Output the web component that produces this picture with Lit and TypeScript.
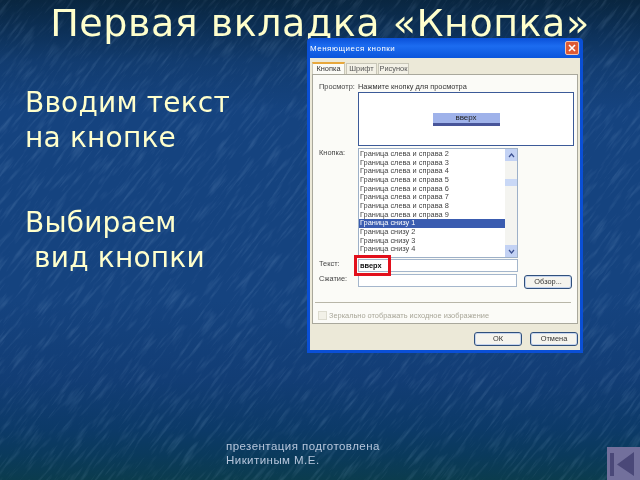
import { LitElement, html, css } from "lit";
import { customElement } from "lit/decorators.js";

const ROWS = [
  "Граница слева и справа 2",
  "Граница слева и справа 3",
  "Граница слева и справа 4",
  "Граница слева и справа 5",
  "Граница слева и справа 6",
  "Граница слева и справа 7",
  "Граница слева и справа 8",
  "Граница слева и справа 9",
  "Граница снизу 1",
  "Граница снизу 2",
  "Граница снизу 3",
  "Граница снизу 4",
];

@customElement("app-root")
export class AppRoot extends LitElement {
  static styles = css`
    :host { display: block; width: 640px; height: 480px; overflow: hidden; }
    .slide {
      position: relative; width: 640px; height: 480px; overflow: hidden;
      display: flex; flex-direction: column;
      font-family: "DejaVu Sans", sans-serif; color: #ffffcc;
      background: linear-gradient(180deg, #092640 0, #0c2f55 28px, #123c70 62px, #15437f 110px, #15437f 300px, #123d75 380px, #0c3a68 430px, #0a3a5c 455px, #0b3c4e 480px);
    }
    .texture { position: absolute; inset: 0; width: 640px; height: 480px; mix-blend-mode: screen; opacity: .24; }
    h1 {
      position: relative; margin: 0; height: 38px; padding-top: 6px; box-sizing: border-box;
      font-weight: 400; font-size: 38px; line-height: 34px; letter-spacing: .55px; text-align: center; white-space: nowrap;
    }
    main { position: relative; display: flex; height: 315px; }
    .lead { width: 307px; box-sizing: border-box; padding: 47px 0 0 25px; font-size: 28px; letter-spacing: .2px; line-height: 35px; white-space: pre; }
    .gap { height: 50px; }
    footer { position: relative; margin-top: auto; display: flex; justify-content: space-between; align-items: flex-end; padding-left: 226px; }
    .note { font: 11.5px/14px "Liberation Sans", sans-serif; color: #b7c6dc; margin-bottom: 13px; letter-spacing: .45px; }
    .nav { width: 33px; height: 33px; background: #72709c; display: block; }

    .dialog {
      position: relative;
      width: 276px; height: 315px; box-sizing: border-box; display: flex; flex-direction: column;
      background: #0a4fd6; border-radius: 4px 4px 0 0; padding: 0 3px 3px;
      font: 7.4px/9px "Liberation Sans", sans-serif; color: #333;
    }
    .titlebar {
      height: 20px; flex: none; display: flex; align-items: center; justify-content: space-between;
      padding: 0 1px 0 0; color: #fff; font-size: 8px; letter-spacing: .5px;
      background: linear-gradient(180deg, #0a50d8, #1c6cf0 40%, #0a55dc);
    }
    .blur { filter: blur(.5px); }
    .close {
      width: 14px; height: 14px; border-radius: 2px; background: #dd5a34; border: 1px solid #f2c4b0;
      box-sizing: border-box; display: block;
    }
    .face { flex: 1; background: #ece9d8; display: flex; flex-direction: column; padding: 3px 2px 0 2px; min-height: 0; }
    .tabs { display: flex; height: 13px; gap: 1px; flex: none; align-items: flex-end; }
    .tab { height: 11px; width: 31px; text-align: center; background: #f3f1e6; border: 1px solid #c8c6b8; border-bottom: 0; box-sizing: border-box; line-height: 10px; color: #555; }
    .tab.on { height: 13px; background: #fbfbf6; border-top: 2px solid #e8a83c; width: 33px; color: #333; line-height: 10px; margin-bottom: -1px; position: relative; }
    .panel {
      height: 250px; flex: none; background: #fbfbf7; border: 1px solid #a9a89c; box-sizing: border-box;
      padding: 7px 5px 0 4px; display: flex; flex-direction: column; position: relative;
    }
    .row { display: flex; flex: none; }
    .lab { width: 39px; padding-left: 2px; flex: none; color: #444; }
    .hint { height: 9px; }
    .preview {
      margin: 1px 0 2px 41px; width: 216px; height: 54px; box-sizing: border-box; background: #fff; border: 1px solid #3c5a98;
      display: flex; align-items: center; justify-content: center; flex: none;
    }
    .pbtn {
      width: 67px; height: 13px; box-sizing: border-box; background: #9fb2ea; border-bottom: 3px solid #48559a;
      text-align: center; line-height: 10px; color: #222; font-size: 8px;
    }
    .listwrap {
      width: 160px; height: 110px; box-sizing: border-box; background: #fff; border: 1px solid #9db0c8; display: flex; flex: none; overflow: hidden;
    }
    .list { flex: 1; min-width: 0; padding-top: 1px; }
    .item { height: 8.67px; line-height: 8.67px; padding-left: 1px; white-space: nowrap; color: #444; }
    .item.sel { background: #3a5cb0; color: #fff; }
    .scroll { width: 12px; flex: none; background: #f4f4f0; display: flex; flex-direction: column; justify-content: space-between; position: relative; }
    .arrow { height: 12px; background: #c3d2f4; color: #3a4f90; display: flex; align-items: center; justify-content: center; }
    .thumb { position: absolute; left: 0; right: 0; top: 30px; height: 7px; background: #c9d8f6; }
    .field { height: 13px; width: 160px; box-sizing: border-box; background: #fff; border: 1px solid #a4b6cc; line-height: 11px; padding-left: 1px; font-weight: 700; color: #111; }
    .mt1 { margin-top: 1px; }
    .mt2 { margin-top: 2px; }
    .xp {
      box-sizing: border-box; background: #f5f4ee; border: 1px solid #30507c; border-radius: 3px; text-align: center; line-height: 12px; color: #333;
      box-shadow: inset 0 0 0 1px #c5d4ee;
    }
    .browse { width: 48px; height: 14px; margin: 1px 0 0 7px; }
    .sep { height: 1px; background: #b8b6a8; margin: 13px 1px 0 0; width: 256px; align-self: flex-end; flex: none; }
    .check { display: flex; align-items: center; gap: 2px; margin-top: 8px; color: #a8a698; }
    .box { width: 9px; height: 9px; background: #f2f1e8; border: 1px solid #dddcd0; box-sizing: border-box; flex: none; margin-left: 1px; }
    .buttons { display: flex; justify-content: flex-end; gap: 8px; padding: 8px 0 0; }
    .buttons .xp { width: 48px; height: 14px; }
    .mark { position: absolute; left: 41px; top: 180px; width: 37px; height: 21px; box-sizing: border-box; border: 3px solid #e2101c; }
  `;

  render() {
    return html`
      <div class="slide">
        <svg class="texture" viewBox="0 0 640 480" aria-hidden="true">
          <filter id="streak" x="0" y="0" width="100%" height="100%">
            <feTurbulence type="fractalNoise" baseFrequency="0.035 0.3" numOctaves="3" seed="4" />
            <feColorMatrix type="matrix" values="0 0 0 0 .42  0 0 0 0 .58  0 0 0 0 .85  1.6 0 0 0 -.82" />
          </filter>
          <rect x="-500" y="-500" width="1700" height="1500" filter="url(#streak)" transform="rotate(-52 320 240)" />
        </svg>
        <h1>Первая вкладка «Кнопка»</h1>
        <main>
          <div class="lead"><div>Вводим текст
на кнопке</div><div class="gap"></div><div>Выбираем
 вид кнопки</div></div>
          <section class="dialog">
            <div class="titlebar">
              <span class="blur">Меняющиеся кнопки</span>
              <svg class="close" viewBox="0 0 12 12"><path d="M3 3l6 6M9 3l-6 6" stroke="#fff" stroke-width="1.6" fill="none" /></svg>
            </div>
            <div class="face">
              <div class="tabs blur">
                <div class="tab on">Кнопка</div>
                <div class="tab">Шрифт</div>
                <div class="tab">Рисунок</div>
              </div>
              <div class="panel">
                <div class="row hint blur"><span class="lab">Просмотр:</span><span>Нажмите кнопку для просмотра</span></div>
                <div class="preview"><div class="pbtn blur">вверх</div></div>
                <div class="row">
                  <span class="lab blur">Кнопка:</span>
                  <div class="listwrap">
                    <div class="list blur">
                      ${ROWS.map((r, i) => html`<div class="item ${i === 8 ? "sel" : ""}">${r}</div>`)}
                    </div>
                    <div class="scroll">
                      <div class="arrow"><svg width="7" height="5" viewBox="0 0 7 5"><path d="M1 4l2.5-3L6 4" fill="none" stroke="currentColor" stroke-width="1.2" /></svg></div>
                      <div class="thumb"></div>
                      <div class="arrow"><svg width="7" height="5" viewBox="0 0 7 5"><path d="M1 1l2.5 3L6 1" fill="none" stroke="currentColor" stroke-width="1.2" /></svg></div>
                    </div>
                  </div>
                </div>
                <div class="row mt1">
                  <span class="lab blur">Текст:</span>
                  <div class="field blur">вверх</div>
                </div>
                <div class="row mt2">
                  <span class="lab blur">Сжатие:</span>
                  <div class="field"></div>
                  <div class="xp browse blur">Обзор...</div>
                </div>
                <div class="sep"></div>
                <div class="check"><span class="box"></span><span class="blur">Зеркально отображать исходное изображение</span></div>
                <div class="mark"></div>
              </div>
              <div class="buttons">
                <div class="xp blur">ОК</div>
                <div class="xp blur">Отмена</div>
              </div>
            </div>
          </section>
        </main>
        <footer>
          <div class="note">презентация подготовлена<br />Никитиным М.Е.</div>
          <svg class="nav" viewBox="0 0 33 33"><path d="M3 6h4v23H3zM10 17.5L27 5v24z" fill="#4a4878" /></svg>
        </footer>
      </div>
    `;
  }
}
